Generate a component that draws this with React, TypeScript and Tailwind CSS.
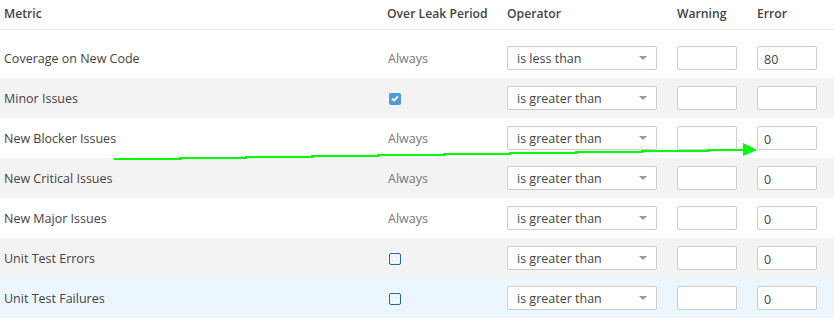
import React from "react";

interface Condition {
    metric: string;
    leak: "always" | "checked" | "unchecked";
    operator: string;
    warning: string;
    error: string;
    bg: string;
}

const conditions: Condition[] = [
    { metric: "Coverage on New Code", leak: "always", operator: "is less than", warning: "", error: "80", bg: "bg-white" },
    { metric: "Minor Issues", leak: "checked", operator: "is greater than", warning: "", error: "", bg: "bg-[#f3f3f3]" },
    { metric: "New Blocker Issues", leak: "always", operator: "is greater than", warning: "", error: "0", bg: "bg-white" },
    { metric: "New Critical Issues", leak: "always", operator: "is greater than", warning: "", error: "0", bg: "bg-[#f3f3f3]" },
    { metric: "New Major Issues", leak: "always", operator: "is greater than", warning: "", error: "0", bg: "bg-white" },
    { metric: "Unit Test Errors", leak: "unchecked", operator: "is greater than", warning: "", error: "0", bg: "bg-[#f3f3f3]" },
    { metric: "Unit Test Failures", leak: "unchecked", operator: "is greater than", warning: "", error: "0", bg: "bg-[#ecf6fe]" },
];

const cols = "grid grid-cols-[383px_120px_170px_80px_81px]";

const LeakCell = ({ leak }: { leak: Condition["leak"] }) => {
    if (leak === "always") return <span className="text-[#777]">Always</span>;
    if (leak === "checked") {
        return (
            <span className="flex h-[12px] w-[12px] items-center justify-center rounded-[2px] bg-[#4b9fd5] ml-[1px] -mt-[1px]">
                <svg width="8" height="7" viewBox="0 0 8 7">
                    <path d="M1 3.6 L3 5.5 L7 1.5" stroke="#fff" strokeWidth="1.8" fill="none" />
                </svg>
            </span>
        );
    }
    return <span className="block h-[12px] w-[12px] rounded-[2px] border-[1.5px] border-[#236a97] ml-[1px] -mt-[1px]" />;
};

// stepped line, drawn like a hand-made annotation
const arrowPath = () => {
    const steps: string[] = [];
    const x0 = 114;
    const x1 = 744;
    const stepW = 66;
    let y = 159;
    steps.push(`M${x0} ${y}`);
    for (let x = x0 + stepW; x < x1; x += stepW) {
        steps.push(`H${x}`);
        y -= 1;
        steps.push(`V${y}`);
    }
    steps.push(`H${x1}`);
    return steps.join(" ");
};

export default function App() {
    return (
        <div className="relative w-[834px] h-[333px] bg-white text-[#444] text-[12.5px]" style={{ fontFamily: '"Open Sans", "Noto Sans", sans-serif' }}>
            <div className={`${cols} h-[29px] items-center border-b border-[#e6e6e6] font-semibold text-[12.2px] box-content`}>
                <div className="pl-[4px]">Metric</div>
                <div className="pl-[4px]">Over Leak Period</div>
                <div className="pl-[4px]">Operator</div>
                <div className="pl-[4px]">Warning</div>
                <div className="pl-[4px]">Error</div>
            </div>
            <div className="pt-[8px]">
                {conditions.map((c) => (
                    <div key={c.metric} className={`${cols} h-[40px] items-center ${c.bg}`}>
                        <div className="pl-[4px] pt-[2px]">{c.metric}</div>
                        <div className="pl-[5px] pt-[2px]"><LeakCell leak={c.leak} /></div>
                        <div className="pl-[4px]">
                            <div className="flex h-[24px] w-[150px] items-center justify-between rounded-[2px] border border-[#cdcdcd] bg-white pl-[9px] pr-[9px]">
                                <span className="pt-[2px]">{c.operator}</span>
                                <span className="h-0 w-0 border-x-[4px] border-t-[4px] border-x-transparent border-t-[#999]" />
                            </div>
                        </div>
                        <div className="pl-[4px]">
                            <div className="h-[24px] w-[60px] rounded-[2px] border border-[#cdcdcd] bg-white px-[6px] pt-[2px] leading-[22px]">{c.warning}</div>
                        </div>
                        <div className="pl-[4px]">
                            <div className="h-[24px] w-[60px] rounded-[2px] border border-[#cdcdcd] bg-white px-[6px] pt-[2px] leading-[22px]">{c.error}</div>
                        </div>
                    </div>
                ))}
            </div>
            <svg className="absolute left-0 top-0 pointer-events-none" width="834" height="333">
                <path d={arrowPath()} stroke="#00ff00" strokeWidth="2" fill="none" shapeRendering="crispEdges" />
                <polygon points="743,143 757,150 743,156" fill="#00ff00" />
            </svg>
        </div>
    );
}
